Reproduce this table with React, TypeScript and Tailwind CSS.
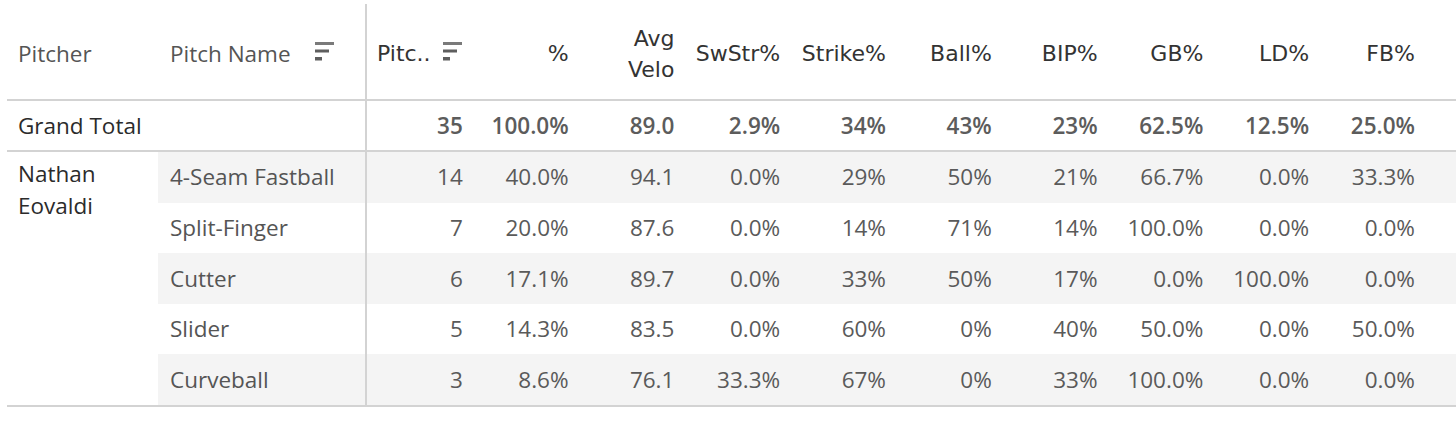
import React from "react";

const headers: string[][] = [
  ["%"],
  ["Avg", "Velo"],
  ["SwStr%"],
  ["Strike%"],
  ["Ball%"],
  ["BIP%"],
  ["GB%"],
  ["LD%"],
  ["FB%"],
];

const total = ["35", "100.0%", "89.0", "2.9%", "34%", "43%", "23%", "62.5%", "12.5%", "25.0%"];

const rows: { name: string; vals: string[] }[] = [
  { name: "4-Seam Fastball", vals: ["14", "40.0%", "94.1", "0.0%", "29%", "50%", "21%", "66.7%", "0.0%", "33.3%"] },
  { name: "Split-Finger", vals: ["7", "20.0%", "87.6", "0.0%", "14%", "71%", "14%", "100.0%", "0.0%", "0.0%"] },
  { name: "Cutter", vals: ["6", "17.1%", "89.7", "0.0%", "33%", "50%", "17%", "0.0%", "100.0%", "0.0%"] },
  { name: "Slider", vals: ["5", "14.3%", "83.5", "0.0%", "60%", "0%", "40%", "50.0%", "0.0%", "50.0%"] },
  { name: "Curveball", vals: ["3", "8.6%", "76.1", "33.3%", "67%", "0%", "33%", "100.0%", "0.0%", "0.0%"] },
];

function SortIcon() {
  return (
    <svg width="20" height="19" viewBox="0 0 20 19" className="shrink-0">
      <rect x="0" y="0" width="19" height="3" fill="#7a7a7a" />
      <rect x="0" y="7.5" width="14" height="3" fill="#5e5e5e" />
      <rect x="0" y="15" width="7" height="3.5" fill="#5e5e5e" />
    </svg>
  );
}

export default function App() {
  return (
    <div className="w-[1456px] h-[427px] bg-white pt-[4px] pl-[7px] flex items-start font-['Open_Sans',sans-serif] overflow-hidden">
      {/* Left pane */}
      <div className="w-[358px] flex flex-col">
        <div className="h-[97px] flex items-center border-b-2 border-[#d3d3d3] text-[22.5px] text-[#555]">
          <div className="w-[151px] pl-[11px] mt-[4px]">Pitcher</div>
          <div className="w-[207px] pl-[12px] pr-[30px] flex items-center justify-between">
            <span className="mt-[4px]">Pitch Name</span>
            <SortIcon />
          </div>
        </div>
        <div className="h-[51px] flex items-center border-b-2 border-[#d3d3d3] pl-[11px] text-[22.5px] text-[#2b2b2b]">
          Grand Total
        </div>
        <div className="flex border-b-2 border-[#d3d3d3]">
          <div className="w-[151px] pl-[11px] pt-[6px] text-[22.5px] leading-[32px] text-[#2b2b2b]">
            Nathan
            <br />
            Eovaldi
          </div>
          <div className="w-[207px] flex flex-col">
            {rows.map((r, i) => (
              <div
                key={r.name}
                className={
                  "h-[50.6px] flex items-center pl-[12px] text-[22.5px] text-[#555] " +
                  (i % 2 === 0 ? "bg-[#f4f4f4]" : "bg-white")
                }
              >
                {r.name}
              </div>
            ))}
          </div>
        </div>
      </div>

      {/* Right pane */}
      <div className="flex-1 flex flex-col border-l-2 border-[#d3d3d3]">
        <div className="h-[97px] flex items-center border-b-2 border-[#d3d3d3] font-['DejaVu_Sans',sans-serif] text-[22px] text-[#333]">
          <div className="w-[105.8px] pl-[10px] pr-[10px] flex items-center justify-between">
            <span className="mt-[4px]">Pitc..</span>
            <SortIcon />
          </div>
          {headers.map((h) => (
            <div key={h.join(" ")} className="w-[105.8px] pr-[10px] text-right leading-[31px] mt-[4px]">
              {h.map((l, k) => (
                <div key={k}>{l}</div>
              ))}
            </div>
          ))}
        </div>
        <div className="h-[51px] flex items-center border-b-2 border-[#d3d3d3] text-[22.5px] font-semibold text-[#5c5c5c]">
          {total.map((v, k) => (
            <div key={k} className="w-[105.8px] pr-[10px] text-right">
              {v}
            </div>
          ))}
        </div>
        <div className="flex flex-col border-b-2 border-[#d3d3d3]">
          {rows.map((r, i) => (
            <div
              key={r.name}
              className={
                "h-[50.6px] flex items-center text-[22.5px] text-[#5a5a5a] " +
                (i % 2 === 0 ? "bg-[#f4f4f4]" : "bg-white")
              }
            >
              {r.vals.map((v, k) => (
                <div key={k} className="w-[105.8px] pr-[10px] text-right">
                  {v}
                </div>
              ))}
            </div>
          ))}
        </div>
      </div>
    </div>
  );
}
